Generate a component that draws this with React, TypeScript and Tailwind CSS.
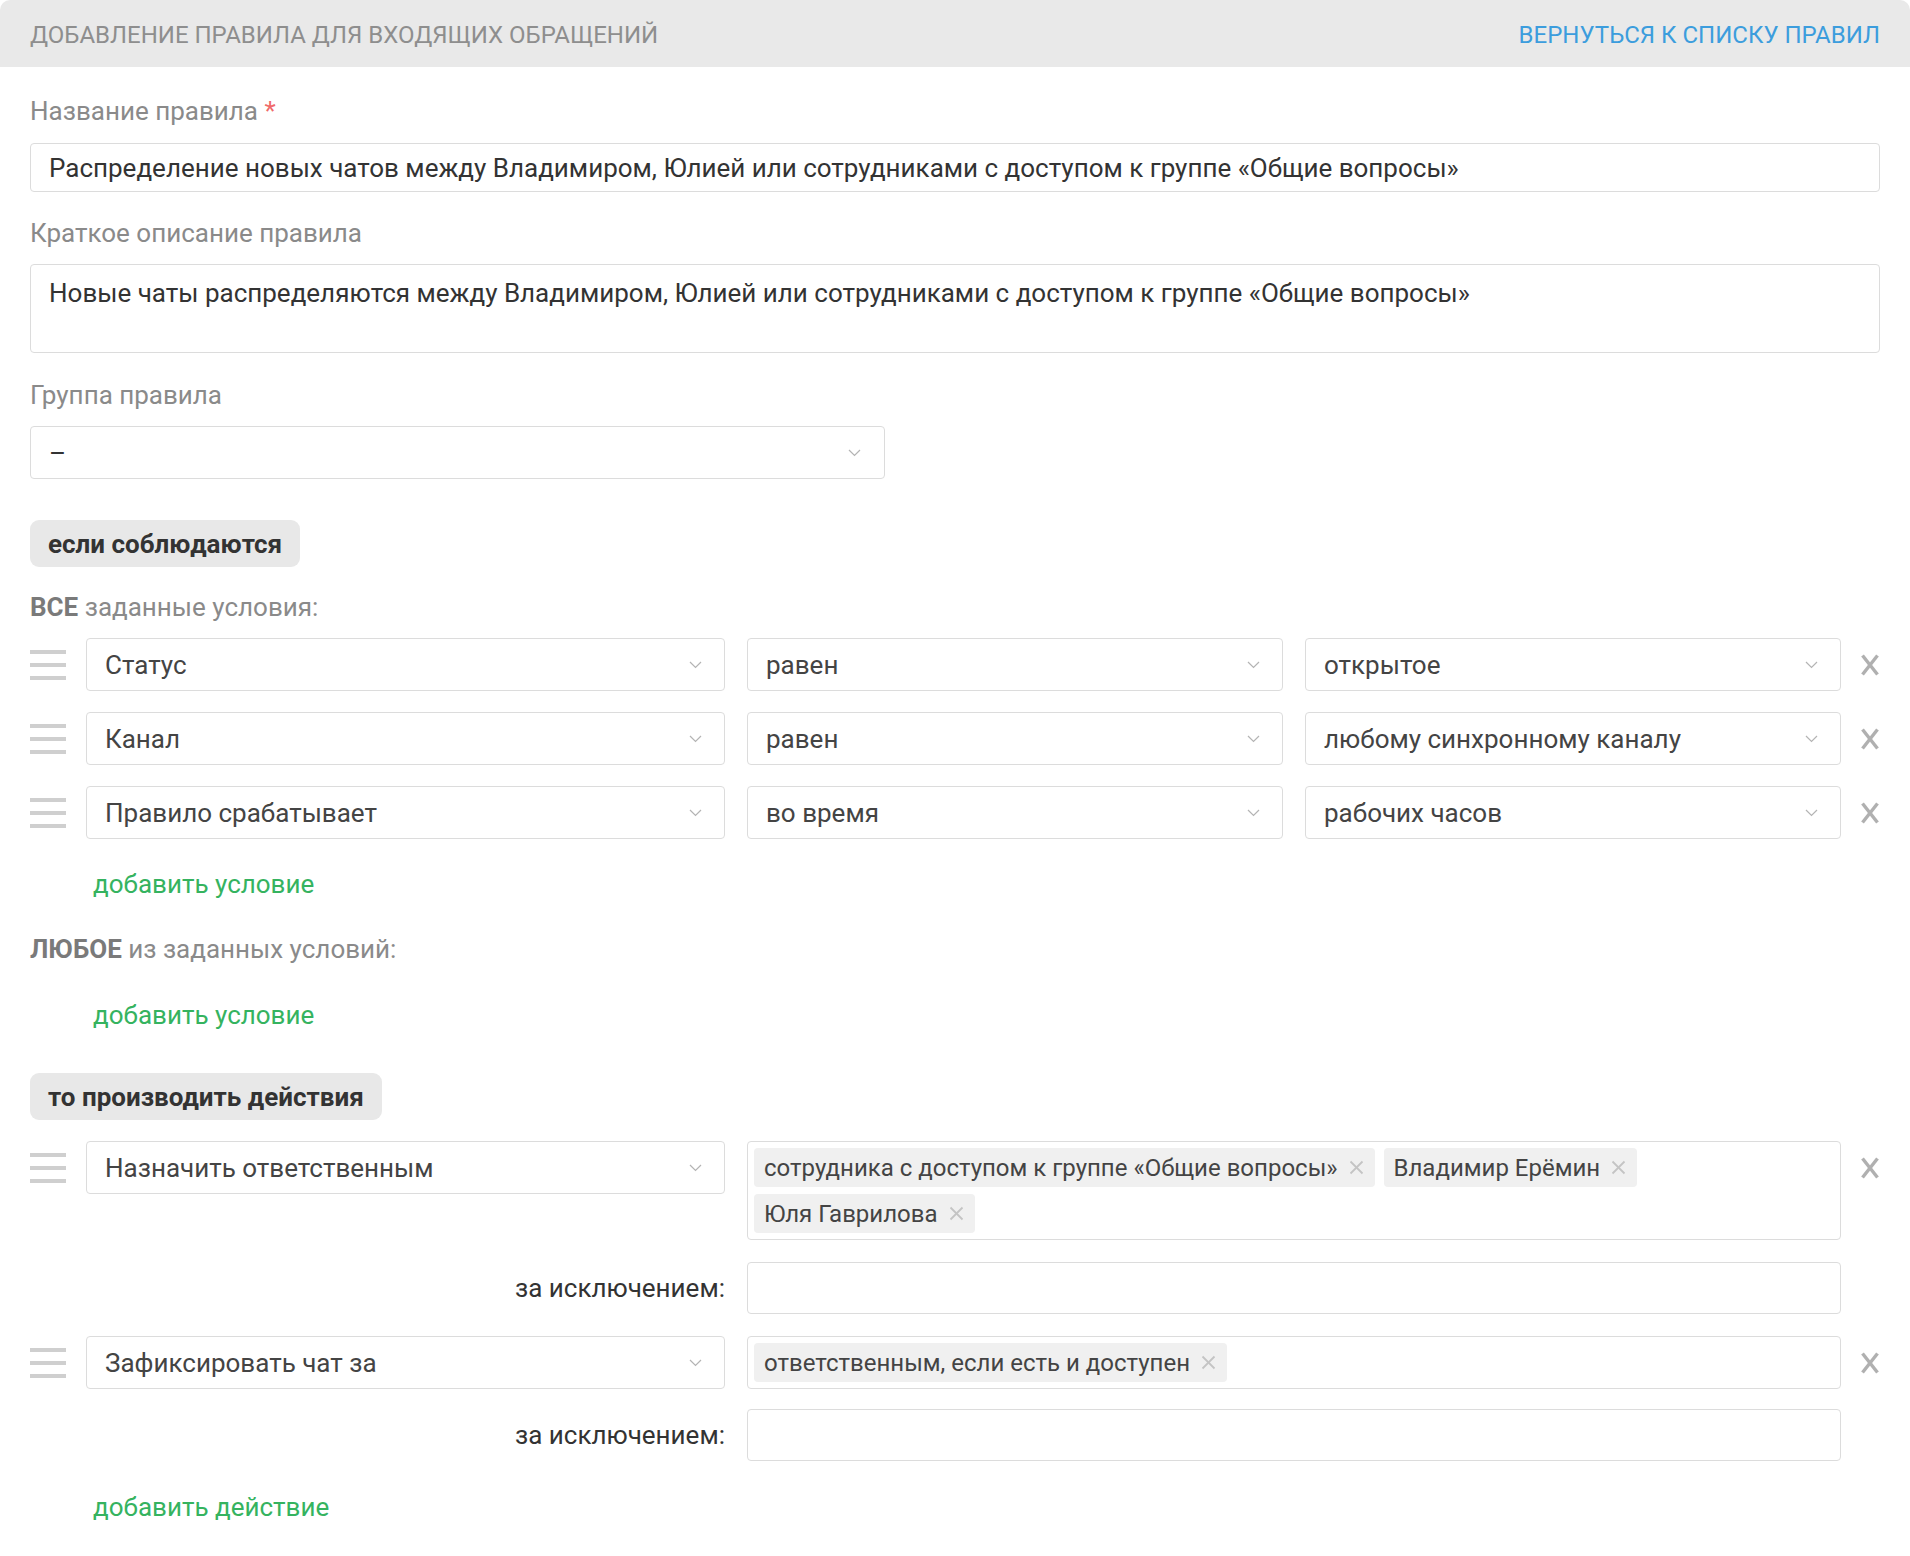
import React from "react";

const FONT = { fontFamily: "Roboto, 'Liberation Sans', Arial, sans-serif" };

function Chevron() {
  return (
    <svg width="13" height="8" viewBox="0 0 13 8" className="shrink-0">
      <polyline points="1,1 6.5,6.5 12,1" fill="none" stroke="#b4b4b4" strokeWidth="1.2" />
    </svg>
  );
}

function Handle() {
  return (
    <div className="w-[36px] mr-[20px] h-[53px] flex flex-col justify-center gap-[9px] shrink-0">
      <div className="h-[4px] bg-[#cfcfcf]" />
      <div className="h-[4px] bg-[#cfcfcf]" />
      <div className="h-[4px] bg-[#cfcfcf]" />
    </div>
  );
}

function RemoveIcon() {
  return (
    <svg width="20" height="22" viewBox="0 0 20 22">
      <line x1="2.5" y1="1.5" x2="17.5" y2="20.5" stroke="#b0b0b0" strokeWidth="3.4" />
      <line x1="17.5" y1="1.5" x2="2.5" y2="20.5" stroke="#b0b0b0" strokeWidth="3.4" />
    </svg>
  );
}

function Select({ value, className }: { value: string; className: string }) {
  return (
    <div
      className={`h-[53px] border border-[#dcdcdc] rounded-[4px] bg-white flex items-center justify-between pl-[18px] pr-[22px] text-[#444] ${className}`}
    >
      <span>{value}</span>
      <Chevron />
    </div>
  );
}

function Tag({ text }: { text: string }) {
  return (
    <div className="h-[39px] bg-[#f0f0f0] rounded-[4px] flex items-center pl-[10px] pr-[11px] gap-[11px] text-[#444] text-[24px]">
      <span>{text}</span>
      <svg width="15" height="15" viewBox="0 0 15 15">
        <line x1="1.5" y1="1.5" x2="13.5" y2="13.5" stroke="#c4c4c4" strokeWidth="1.8" />
        <line x1="13.5" y1="1.5" x2="1.5" y2="13.5" stroke="#c4c4c4" strokeWidth="1.8" />
      </svg>
    </div>
  );
}

function ConditionRow({ a, b, c }: { a: string; b: string; c: string }) {
  return (
    <div className="flex items-center">
      <Handle />
      <Select value={a} className="w-[639px]" />
      <Select value={b} className="w-[536px] ml-[22px]" />
      <Select value={c} className="w-[536px] ml-[22px]" />
      <div className="flex-1 flex justify-end">
        <RemoveIcon />
      </div>
    </div>
  );
}

function ExceptRow() {
  return (
    <div className="flex items-center">
      <div className="w-[695px] text-right text-[#333]">за исключением:</div>
      <div className="w-[1094px] ml-[22px] h-[52px] border border-[#dcdcdc] rounded-[4px] bg-white" />
    </div>
  );
}

function Pill({ text }: { text: string }) {
  return (
    <div className="inline-flex items-center h-[47px] px-[18px] bg-[#e8e8e8] rounded-[9px] font-bold text-[#333]">
      {text}
    </div>
  );
}

function AddLink({ text }: { text: string }) {
  return <div className="pl-[63px] h-[30px] leading-[30px] text-[#35b35f]">{text}</div>;
}

export default function App() {
  return (
    <div className="min-h-screen bg-white text-[26px] leading-[30px]" style={FONT}>
      <div className="h-[67px] bg-[#e9e9e9] rounded-t-[10px] flex items-center justify-between px-[30px] text-[24px] pt-[2px]">
        <span className="text-[#8e8e8e] uppercase">Добавление правила для входящих обращений</span>
        <span className="text-[#3c9ddd] uppercase">Вернуться к списку правил</span>
      </div>

      <div className="px-[30px] pt-[29px] pb-[30px] flex flex-col">
        <div className="text-[#8a8a8a]">
          Название правила <span className="text-[#f06a6a]">*</span>
        </div>
        <div className="mt-[17px] h-[49px] border border-[#dcdcdc] rounded-[4px] flex items-center pl-[18px] text-[#333]">
          Распределение новых чатов между Владимиром, Юлией или сотрудниками с доступом к группе «Общие вопросы»
        </div>

        <div className="mt-[26px] text-[#8a8a8a]">Краткое описание правила</div>
        <div className="mt-[16px] h-[89px] border border-[#dcdcdc] rounded-[4px] pl-[18px] pt-[13px] text-[#333]">
          Новые чаты распределяются между Владимиром, Юлией или сотрудниками с доступом к группе «Общие вопросы»
        </div>

        <div className="mt-[27px] text-[#8a8a8a]">Группа правила</div>
        <div className="mt-[16px] w-[855px] h-[53px] border border-[#dcdcdc] rounded-[4px] flex items-center justify-between pl-[18px] pr-[23px] text-[#333]">
          <span>–</span>
          <Chevron />
        </div>

        <div className="mt-[41px]">
          <Pill text="если соблюдаются" />
        </div>

        <div className="mt-[25px] text-[#8a8a8a]">
          <span className="font-bold text-[#7a7a7a]">ВСЕ</span> заданные условия:
        </div>

        <div className="mt-[16px] flex flex-col gap-[21px]">
          <ConditionRow a="Статус" b="равен" c="открытое" />
          <ConditionRow a="Канал" b="равен" c="любому синхронному каналу" />
          <ConditionRow a="Правило срабатывает" b="во время" c="рабочих часов" />
        </div>

        <div className="mt-[30px]">
          <AddLink text="добавить условие" />
        </div>

        <div className="mt-[35px] text-[#8a8a8a]">
          <span className="font-bold text-[#7a7a7a]">ЛЮБОЕ</span> из заданных условий:
        </div>

        <div className="mt-[36px]">
          <AddLink text="добавить условие" />
        </div>

        <div className="mt-[43px]">
          <Pill text="то производить действия" />
        </div>

        <div className="mt-[21px] flex items-start">
          <Handle />
          <Select value="Назначить ответственным" className="w-[639px]" />
          <div className="w-[1094px] ml-[22px] border border-[#dcdcdc] rounded-[4px] bg-white p-[6px] flex flex-wrap gap-x-[9px] gap-y-[7px]">
            <Tag text="сотрудника с доступом к группе «Общие вопросы»" />
            <Tag text="Владимир Ерёмин" />
            <Tag text="Юля Гаврилова" />
          </div>
          <div className="flex-1 h-[53px] flex items-center justify-end">
            <RemoveIcon />
          </div>
        </div>

        <div className="mt-[22px]">
          <ExceptRow />
        </div>

        <div className="mt-[22px] flex items-start">
          <Handle />
          <Select value="Зафиксировать чат за" className="w-[639px]" />
          <div className="w-[1094px] ml-[22px] h-[53px] border border-[#dcdcdc] rounded-[4px] bg-white px-[6px] flex items-center">
            <Tag text="ответственным, если есть и доступен" />
          </div>
          <div className="flex-1 h-[53px] flex items-center justify-end">
            <RemoveIcon />
          </div>
        </div>

        <div className="mt-[20px]">
          <ExceptRow />
        </div>

        <div className="mt-[31px]">
          <AddLink text="добавить действие" />
        </div>
      </div>
    </div>
  );
}
